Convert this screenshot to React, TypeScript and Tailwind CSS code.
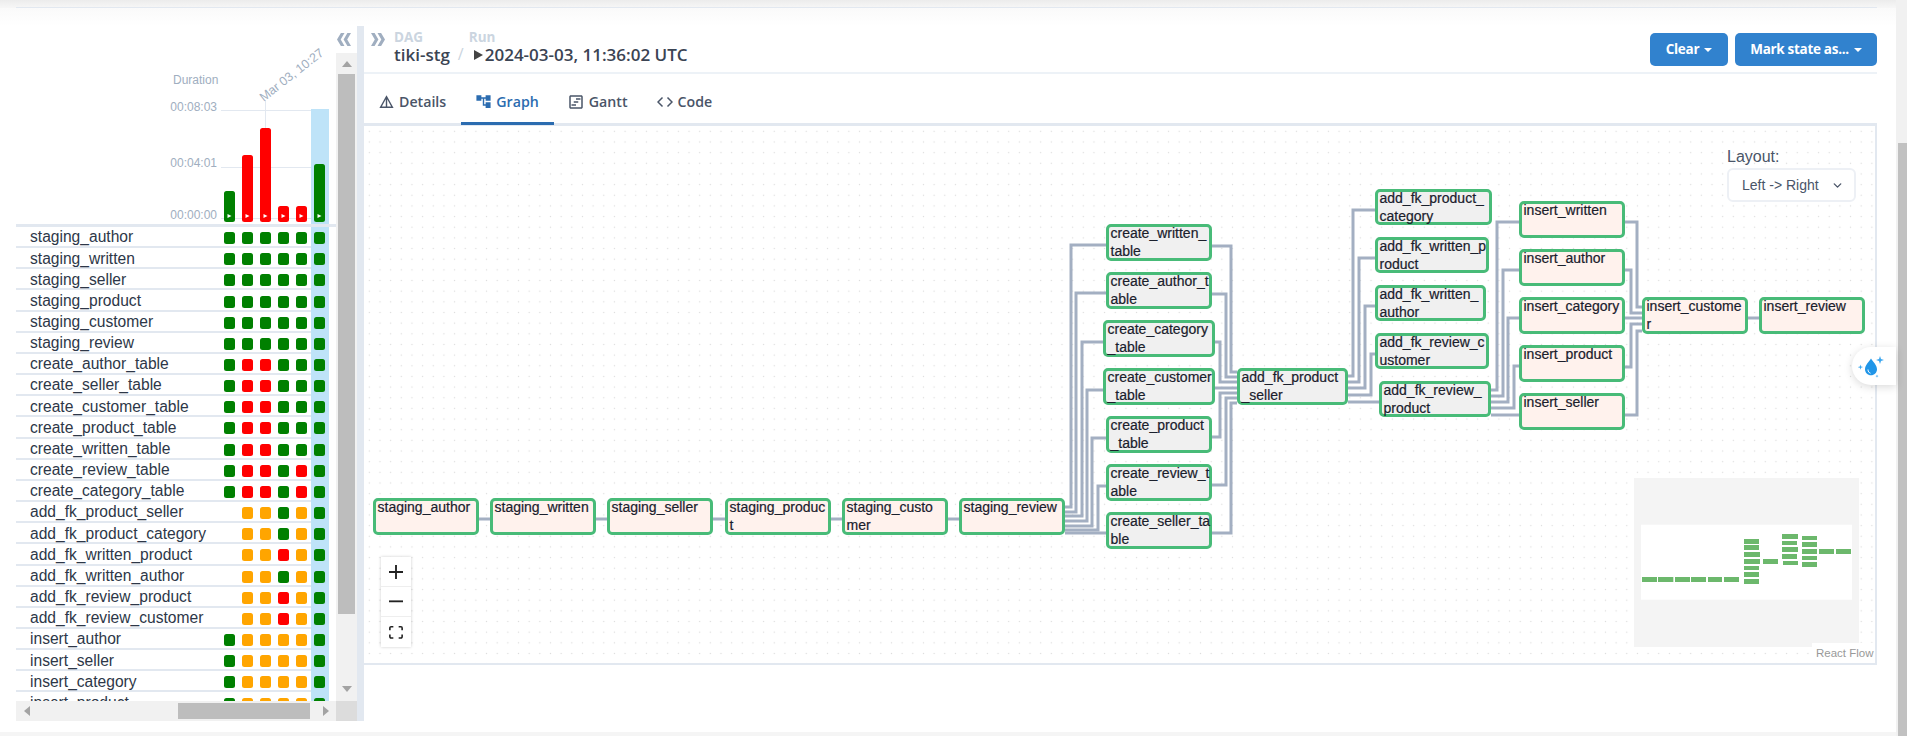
import React from "react";
import { MdDetails, MdAccountTree, MdOutlineViewTimeline } from "react-icons/md";
import { ChevronDown } from "lucide-react";

const OX = 364;
const OY = 126;
const tasks: [string, string][] = [
  ["staging_author", "GGGGGG"],
  ["staging_written", "GGGGGG"],
  ["staging_seller", "GGGGGG"],
  ["staging_product", "GGGGGG"],
  ["staging_customer", "GGGGGG"],
  ["staging_review", "GGGGGG"],
  ["create_author_table", "GRRGGG"],
  ["create_seller_table", "GRRGGG"],
  ["create_customer_table", "GRRGGG"],
  ["create_product_table", "GRRGGG"],
  ["create_written_table", "GRRGGG"],
  ["create_review_table", "GRRGRG"],
  ["create_category_table", "GRRGRG"],
  ["add_fk_product_seller", "_OOGOG"],
  ["add_fk_product_category", "_OOGOG"],
  ["add_fk_written_product", "_OOROG"],
  ["add_fk_written_author", "_OOGOG"],
  ["add_fk_review_product", "_OOROG"],
  ["add_fk_review_customer", "_OOROG"],
  ["insert_author", "GOOOOG"],
  ["insert_seller", "GOOOOG"],
  ["insert_category", "GOOOOG"],
  ["insert_product", "GOOOOG"],
];
const statusClass: Record<string, string> = {
  G: "bg-[#008000]",
  R: "bg-[#ff0000]",
  O: "bg-[#ffa500]",
  _: "bg-transparent",
};
const bars: [number, string][] = [
  [31, "bg-[#008000]"],
  [67, "bg-[#ff0000]"],
  [94, "bg-[#ff0000]"],
  [16, "bg-[#ff0000]"],
  [16, "bg-[#ff0000]"],
  [58, "bg-[#008000]"],
];
const nodes: [number, number, number, number, string, boolean][] = [
  [373, 498, 479, 535, "staging_author", false],
  [490, 498, 596, 535, "staging_written", false],
  [607, 498, 713, 535, "staging_seller", false],
  [725, 498, 831, 535, "staging_produc\nt", false],
  [842, 498, 948, 535, "staging_custo\nmer", false],
  [959, 498, 1065, 535, "staging_review", false],
  [1106, 224, 1212, 261, "create_written_\ntable", true],
  [1106, 272, 1212, 309, "create_author_t\nable", true],
  [1103, 320, 1215, 357, "create_category\n_table", true],
  [1103, 368, 1215, 405, "create_customer\n_table", true],
  [1106, 416, 1212, 453, "create_product\n_table", true],
  [1106, 464, 1212, 501, "create_review_t\nable", true],
  [1106, 512, 1212, 549, "create_seller_ta\nble", true],
  [1237, 368, 1348, 405, "add_fk_product\n_seller", true],
  [1375, 189, 1492, 225, "add_fk_product_\ncategory", true],
  [1375, 237, 1489, 273, "add_fk_written_p\nroduct", true],
  [1375, 285, 1486, 321, "add_fk_written_\nauthor", true],
  [1375, 333, 1489, 369, "add_fk_review_c\nustomer", true],
  [1379, 381, 1491, 417, "add_fk_review_\nproduct", true],
  [1519, 201, 1625, 238, "insert_written", false],
  [1519, 249, 1625, 286, "insert_author", false],
  [1519, 297, 1625, 334, "insert_category", false],
  [1519, 345, 1625, 382, "insert_product", false],
  [1519, 393, 1625, 430, "insert_seller", false],
  [1642, 297, 1748, 334, "insert_custome\nr", false],
  [1759, 297, 1865, 334, "insert_review", false],
];
const edges: number[][] = [
  [479, 519, 490, 519],
  [596, 519, 607, 519],
  [713, 519, 725, 519],
  [831, 519, 842, 519],
  [948, 519, 959, 519],
  [1065, 507, 1071, 507, 1071, 245, 1106, 245],
  [1065, 512, 1076, 512, 1076, 293, 1106, 293],
  [1065, 516, 1082, 516, 1082, 342, 1103, 342],
  [1065, 521, 1087, 521, 1087, 390, 1103, 390],
  [1065, 526, 1092, 526, 1092, 438, 1106, 438],
  [1065, 530, 1098, 530, 1098, 486, 1106, 486],
  [1065, 533, 1106, 533],
  [1212, 246, 1231, 246, 1231, 372, 1237, 372],
  [1212, 294, 1226, 294, 1226, 377, 1237, 377],
  [1215, 342, 1220, 342, 1220, 382, 1237, 382],
  [1215, 388, 1237, 388],
  [1212, 437, 1220, 437, 1220, 393, 1237, 393],
  [1212, 485, 1226, 485, 1226, 398, 1237, 398],
  [1212, 533, 1231, 533, 1231, 403, 1237, 403],
  [1348, 376, 1353, 376, 1353, 210, 1375, 210],
  [1348, 382, 1359, 382, 1359, 258, 1375, 258],
  [1348, 388, 1365, 388, 1365, 306, 1375, 306],
  [1348, 395, 1371, 395, 1371, 354, 1375, 354],
  [1348, 402, 1379, 402],
  [1491, 390, 1497, 390, 1497, 222, 1519, 222],
  [1491, 396, 1503, 396, 1503, 270, 1519, 270],
  [1491, 402, 1508, 402, 1508, 318, 1519, 318],
  [1491, 408, 1514, 408, 1514, 366, 1519, 366],
  [1491, 415, 1519, 415],
  [1625, 222, 1637, 222, 1637, 307, 1642, 307],
  [1625, 270, 1631, 270, 1631, 313, 1642, 313],
  [1625, 318, 1642, 318],
  [1625, 367, 1631, 367, 1631, 324, 1642, 324],
  [1625, 415, 1637, 415, 1637, 331, 1642, 331],
  [1748, 318, 1759, 318],
];
const mini: number[][] = [
  [66, 354, 45, 15], [114, 354, 46, 15], [165, 354, 45, 15], [213, 354, 45, 15], [264, 354, 42, 15], [312, 354, 45, 15],
  [372, 240, 45, 15], [372, 258, 45, 15], [372, 279, 48, 15], [372, 300, 48, 15], [372, 321, 45, 12], [372, 339, 45, 15], [372, 360, 45, 15],
  [429, 300, 45, 15],
  [486, 225, 48, 15], [486, 246, 45, 12], [486, 264, 48, 15], [486, 285, 45, 15], [489, 306, 45, 12],
  [546, 231, 45, 12], [546, 249, 45, 15], [546, 270, 45, 15], [546, 291, 45, 12], [546, 309, 45, 15],
  [597, 270, 45, 15], [648, 270, 45, 15],
];

function Tri({ d, cls }: { d: string; cls?: string }) {
  return (
    <svg width="10" height="10" viewBox="0 0 10 10" className={cls}>
      <path d={d} fill="#a3a3a3" />
    </svg>
  );
}

function DoubleChevron({ cls }: { cls?: string }) {
  return (
    <svg width="14" height="13" viewBox="0 0 14 13" className={cls}>
      <path d="M0 0h3.600l3.800 6.500-3.800 6.500H0l3.800-6.500zM6.500 0h3.600L14 6.500 10.100 13H6.500l3.800-6.500z" fill="#a0aec0" />
    </svg>
  );
}

function Left() {
  return (
    <div className="w-[341px] h-[695px] flex flex-col shrink-0 font-['Liberation_Sans',sans-serif]">
      <div className="h-[27px] flex justify-end pr-[6px] pt-[7px] shrink-0">
        <DoubleChevron cls="rotate-180" />
      </div>
      <div className="flex-1 flex min-h-0">
        <div className="w-[320px] flex flex-col min-h-0">
          <div className="h-[174px] shrink-0 border-b-[3px] border-[#e2e8f0] relative flex items-end">
            <div className="absolute left-[157px] top-[19px] text-[12px] leading-[16px] text-[#a0aec0]">Duration</div>
            <div className="absolute right-[119px] w-[60px] text-right top-[46px] text-[12px] leading-[16px] text-[#a0aec0]">00:08:03</div>
            <div className="absolute right-[119px] w-[60px] text-right top-[102px] text-[12px] leading-[16px] text-[#a0aec0]">00:04:01</div>
            <div className="absolute right-[119px] w-[60px] text-right top-[154px] text-[12px] leading-[16px] text-[#a0aec0]">00:00:00</div>
            <div className="absolute left-[205px] w-[90px] top-[57px] h-px bg-[#e2e8f0]" />
            <div className="absolute left-[205px] w-[90px] top-[114px] h-px bg-[#e2e8f0]" />
            <div className="absolute left-[205px] w-[90px] top-[165px] h-px bg-[#e2e8f0]" />
            <div className="absolute left-[249px] top-[47px] w-px h-[30px] bg-[#e2e8f0]" />
            <div className="absolute left-[237px] top-[15px] -rotate-[38deg] text-[12.5px] leading-[14px] whitespace-nowrap text-[#a0aec0]">Mar 03, 10:27</div>
            <div className="ml-[205px] flex items-end h-full relative">
              {bars.map(([h, c], i) => (
                <div key={i} className={i === 5 ? "w-[18px] h-[115px] pl-[3px] flex items-end bg-[#bee3f8] pb-[2px]" : "w-[18px] pl-[3px] flex items-end pb-[2px]"}>
                  <div className={`w-[11px] rounded-[2.5px] flex items-end justify-center pb-[3px] ${c}`} style={{ height: h }}>
                    <svg width="5" height="6" viewBox="0 0 5 6"><path d="M0.5 1v4L4.5 3z" fill="#fff" /></svg>
                  </div>
                </div>
              ))}
            </div>
          </div>
          <div className="flex-1 min-h-0 overflow-hidden">
            {tasks.map(([name, st]) => (
              <div key={name} className="flex h-[21.17px]">
                <div className="w-[295px] flex items-center border-b-2 border-[#e2e8f0] pt-[3px]">
                  <div className="w-[205px] pl-[14px] text-[15.6px] -mt-[2px] text-[#2d3748] whitespace-nowrap">{name}</div>
                  {st.slice(0, 5).split("").map((s, i) => (
                    <div key={i} className="w-[18px] pl-[3px]">
                      <div className={`w-[11px] h-[12px] rounded-[2.5px] ${statusClass[s]}`} />
                    </div>
                  ))}
                </div>
                <div className="w-[18px] pl-[3px] bg-[#bee3f8] flex items-center pt-[1px]">
                  <div className={`w-[11px] h-[12px] rounded-[2.5px] ${statusClass[st[5]]}`} />
                </div>
              </div>
            ))}
          </div>
          <div className="h-[20px] shrink-0 bg-[#f1f1f1] flex items-center">
            <Tri d="M7 0v10L1 5z" cls="ml-[7px]" />
            <div className="ml-[145px] w-[132px] h-[16px] bg-[#bdbdbd]" />
            <Tri d="M3 0v10l6-5z" cls="ml-[10px]" />
          </div>
        </div>
        <div className="w-[21px] flex flex-col">
          <div className="flex-1 min-h-0 bg-[#f1f1f1] flex flex-col items-center">
            <div className="h-[21px] w-full flex items-center justify-center">
              <Tri d="M0 8h10L5 2z" />
            </div>
            <div className="w-[17px] h-[540px] bg-[#bdbdbd]" />
            <div className="flex-1" />
            <div className="h-[24px] w-full flex items-center justify-center">
              <Tri d="M0 2h10L5 8z" />
            </div>
          </div>
          <div className="h-[20px] bg-[#dcdcdc]" />
        </div>
      </div>
    </div>
  );
}

function Tab({ icon, label, active }: { icon: React.ReactNode; label: string; active?: boolean }) {
  return (
    <div
      className={
        active
          ? "h-[51px] pt-[7px] flex items-center gap-[5px] px-[15px] border-b-[3px] border-[#2b6cb0] text-[#2b6cb0]"
          : "h-[51px] pt-[7px] flex items-center gap-[5px] px-[15px] border-b-[3px] border-transparent text-[#4a5568]"
      }
    >
      <span className="w-[15px] flex items-center justify-center">{icon}</span>
      <span className="font-semibold text-[14.2px]">{label}</span>
    </div>
  );
}

function Graph() {
  return (
    <div className="h-[542px] border-t-[3px] border-r-2 border-b-2 border-[#e2e8f0] relative bg-white bg-[radial-gradient(circle,#dcdcdc_0.7px,transparent_1px)] bg-[size:10.67px_10.67px] overflow-hidden">
      <svg className="absolute left-0 top-0" width="1513" height="540" viewBox={`${OX} ${OY} 1513 540`}>
        {edges.map((p, i) => (
          <polyline key={i} points={p.join(",")} fill="none" stroke="#a3afc2" strokeWidth="3" />
        ))}
      </svg>
      {nodes.map(([x1, y1, x2, y2, label, grey]) => (
        <div
          key={label}
          className={`absolute border-[3px] border-[#48bb78] rounded-[5px] pl-[1.5px] font-['Liberation_Sans',sans-serif] text-[14px] leading-[18px] [-webkit-text-stroke:0.2px_#1a202c] text-[#1a202c] whitespace-pre ${grey ? "bg-[#f0f0f0]" : "bg-[#fff2ed]"}`}
          style={{ left: x1 - OX, top: y1 - OY, width: x2 - x1, height: y2 - y1 }}
        >
          <div className="-mt-[3px]">{label}</div>
        </div>
      ))}
      <div className="absolute right-[19px] top-[21px] w-[129px] font-['Liberation_Sans',sans-serif]">
        <div className="text-[16px] leading-[20px] text-[#4a5568]">Layout:</div>
        <div className="h-[34px] mt-[1px] border-2 border-[#edf0f5] rounded-[6px] bg-white flex items-center pl-[13px] pr-[10px] justify-between text-[14px] text-[#4a5568]">
          <span>Left -&gt; Right</span>
          <ChevronDown size={13} strokeWidth={2.5} />
        </div>
      </div>
      <div className="absolute left-[17px] top-[431px] w-[30px] bg-white shadow-[0_0_3px_rgba(0,0,0,0.2)]">
        <div className="h-[30px] border-b border-[#eee] flex items-center justify-center">
          <svg width="14" height="14" viewBox="0 0 32 32"><path d="M32 18.133H18.133V32h-4.266V18.133H0v-4.266h13.867V0h4.266v13.867H32z" fill="#222" /></svg>
        </div>
        <div className="h-[30px] border-b border-[#eee] flex items-center justify-center">
          <svg width="14" height="3" viewBox="0 0 32 5"><path d="M0 0h32v4.2H0z" fill="#222" /></svg>
        </div>
        <div className="h-[30px] flex items-center justify-center">
          <svg width="14" height="13" viewBox="0 0 32 30"><path d="M3.692 4.63c0-.53.4-.938.939-.938h5.215V0H4.708C2.13 0 0 2.054 0 4.63v5.216h3.692V4.63zM27.354 0h-5.2v3.692h5.17c.53 0 .984.4.984.939v5.215H32V4.631A4.624 4.624 0 0027.354 0zm.954 24.83c0 .532-.4.94-.939.94h-5.215v3.768h5.215c2.577 0 4.631-2.13 4.631-4.707v-5.139h-3.692v5.139zm-23.677.94c-.531 0-.939-.4-.939-.94v-5.138H0v5.139c0 2.577 2.13 4.707 4.708 4.707h5.138V25.77H4.631z" fill="#222" /></svg>
        </div>
      </div>
      <svg className="absolute right-[16px] bottom-[16px]" width="225" height="169" viewBox="42 57 675 507">
        <rect x="42" y="57" width="675" height="507" fill="#f4f4f4" />
        <rect x="63" y="197" width="633" height="225" fill="#fff" />
        {mini.map((r, i) => (
          <rect key={i} x={r[0]} y={r[1]} width={r[2]} height={r[3]} fill="#6cb86c" />
        ))}
      </svg>
      <div className="absolute right-0 bottom-0 w-[63px] h-[20px] pl-[4px] bg-white font-['Liberation_Sans',sans-serif] text-[11.5px] leading-[20px] text-[#999] whitespace-nowrap">React Flow</div>
    </div>
  );
}

function Right() {
  return (
    <div className="w-[1513px] shrink-0 font-['Open_Sans',sans-serif]">
      <div className="h-[48px] border-b-2 border-[#edf2f7] flex justify-between">
        <div className="flex">
          <DoubleChevron cls="ml-[7px] mt-[7px]" />
          <div className="ml-[9px]">
            <div className="text-[13.5px] leading-[15px] mt-[4px] font-bold text-[#cbd5e0]">DAG</div>
            <div className="text-[17px] leading-[20px] font-semibold text-[#3b4453]">tiki-stg</div>
          </div>
          <div className="ml-[8px] mt-[18px] text-[16px] leading-[20px] text-[#cbd5e0]">/</div>
          <div className="ml-[5px]">
            <div className="text-[13.5px] leading-[15px] mt-[4px] font-bold text-[#cbd5e0]">Run</div>
            <div className="flex items-center text-[17px] leading-[20px] font-semibold text-[#3b4453]">
              <svg width="16" height="12" viewBox="0 0 16 12"><path d="M5 1v10l9-5z" fill="#444" /></svg>
              2024-03-03, 11:36:02 UTC
            </div>
          </div>
        </div>
        <div className="flex gap-[7px] pt-[7px]">
          <div className="w-[78px] h-[33px] rounded-[5px] bg-[#3182ce] text-white text-[13.5px] tracking-[-0.3px] font-bold flex items-center justify-center gap-[5px]">
            Clear
            <svg width="8" height="4" viewBox="0 0 8 4"><path d="M0 0h8L4 4z" fill="#fff" /></svg>
          </div>
          <div className="w-[142px] h-[33px] rounded-[5px] bg-[#3182ce] text-white text-[13.5px] tracking-[-0.3px] font-bold flex items-center justify-center gap-[5px]">
            Mark state as...
            <svg width="8" height="4" viewBox="0 0 8 4"><path d="M0 0h8L4 4z" fill="#fff" /></svg>
          </div>
        </div>
      </div>
      <div className="h-[49px] flex relative z-10">
        <Tab icon={<MdDetails size={17} className="shrink-0" />} label="Details" />
        <Tab icon={<MdAccountTree size={17} className="shrink-0" />} label="Graph" active />
        <Tab icon={<MdOutlineViewTimeline size={18} className="shrink-0" />} label="Gantt" />
        <Tab
          icon={
            <svg width="16" height="12" viewBox="0 0 16 12" className="shrink-0" fill="none" stroke="currentColor" strokeWidth="1.5">
              <polyline points="5.500,1.500 1,6 5.500,10.500" />
              <polyline points="10.500,1.500 15,6 10.500,10.500" />
            </svg>
          }
          label="Code"
        />
      </div>
      <Graph />
    </div>
  );
}

export default function App() {
  return (
    <div className="w-[1907px] h-[736px] overflow-hidden flex bg-white relative">
      <div className="w-[1896px] h-full flex flex-col">
        <div className="h-[8px] shrink-0 bg-gradient-to-b from-[#ececec] to-[#f7f7f7] pl-[16px] pr-[19px] flex flex-col justify-end">
          <div className="h-px bg-[#e2e8f0]" />
        </div>
        <div className="h-[18px] shrink-0 bg-gradient-to-b from-[#fafafa] to-white" />
        <div className="flex pl-[16px] h-[695px] shrink-0">
          <Left />
          <div className="w-[7px] bg-[#e2e8f0] shrink-0" />
          <Right />
        </div>
        <div className="flex-1" />
        <div className="h-[4px] bg-[#f5f5f5] shrink-0" />
      </div>
      <div className="w-[11px] h-full bg-[#f1f1f1] flex flex-col items-end shrink-0">
        <div className="h-[143px] shrink-0" />
        <div className="w-[9px] flex-1 bg-[#c1c1c1]" />
      </div>
      <div className="absolute left-[1852px] top-[347px] w-[44px] h-[38px] bg-white rounded-l-[19px] shadow-[0_2px_8px_rgba(0,0,0,0.15)] flex items-center pl-[6px]">
        <svg width="30" height="30" viewBox="0 0 30 30">
          <path d="M13 7.500c-2 3.500-6 6.500-6 10.700 0 3.400 2.700 6 6 6s6-2.600 6-6C19 14 15 11 13 7.500z" fill="#2196e8" />
          <path d="M10 18.500c0 2 1 3.300 2.500 3.700" stroke="#fff" strokeWidth="1" fill="none" />
          <path d="M22 5l1 3 3 1-3 1-1 3-1-3-3-1 3-1z" fill="#3ba6ef" />
          <path d="M2.500 13.500l.6 2 2 .6-2 .6-.6 2-.6-2-2-.6 2-.6z" fill="#3ba6ef" />
          <path d="M19 23.500l.4 1.200 1.200.4-1.200.4-.4 1.200-.4-1.200-1.200-.4 1.200-.4z" fill="#3ba6ef" />
        </svg>
      </div>
    </div>
  );
}
